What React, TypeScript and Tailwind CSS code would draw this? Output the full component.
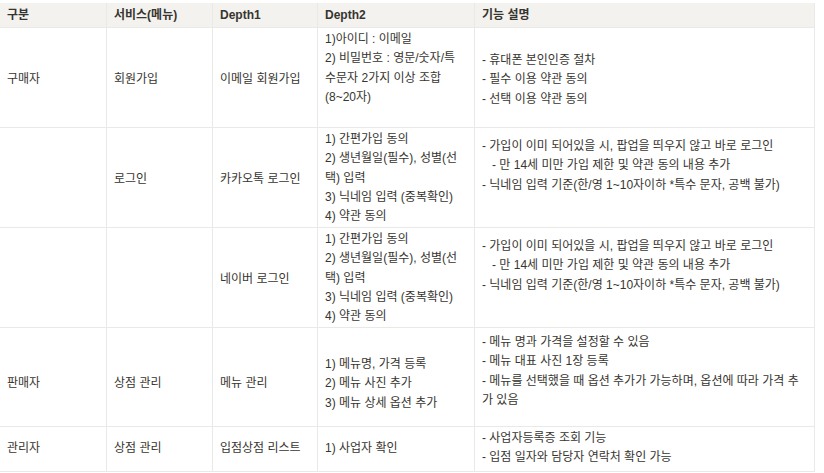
type Cell = { lines: string[]; pt: number; indent?: number[] };
type Row = { h: string; cells: Cell[] };

const cols = "grid grid-cols-[106px_106px_105px_157px_341px]";

const rows: Row[] = [
	{
		h: "h-[100px]",
		cells: [
			{ lines: ["구매자"], pt: 42 },
			{ lines: ["회원가입"], pt: 42 },
			{ lines: ["이메일 회원가입"], pt: 42 },
			{
				lines: ["1)아이디 : 이메일", "2) 비밀번호 : 영문/숫자/특", "수문자 2가지 이상 조합", "(8~20자)"],
				pt: 2,
			},
			{ lines: ["- 휴대폰 본인인증 절차", "- 필수 이용 약관 동의", "- 선택 이용 약관 동의"], pt: 23 },
		],
	},
	{
		h: "h-[100px]",
		cells: [
			{ lines: [], pt: 0 },
			{ lines: ["로그인"], pt: 42 },
			{ lines: ["카카오톡 로그인"], pt: 42 },
			{
				lines: ["1) 간편가입 동의", "2) 생년월일(필수), 성별(선", "택) 입력", "3) 닉네임 입력 (중복확인)", "4) 약관 동의"],
				pt: 2,
			},
			{
				lines: [
					"- 가입이 이미 되어있을 시, 팝업을 띄우지 않고 바로 로그인",
					"- 만 14세 미만 가입 제한 및 약관 동의 내용 추가",
					"- 닉네임 입력 기준(한/영 1~10자이하 *특수 문자, 공백 불가)",
				],
				pt: 9,
				indent: [1],
			},
		],
	},
	{
		h: "h-[100px]",
		cells: [
			{ lines: [], pt: 0 },
			{ lines: [], pt: 0 },
			{ lines: ["네이버 로그인"], pt: 42 },
			{
				lines: ["1) 간편가입 동의", "2) 생년월일(필수), 성별(선", "택) 입력", "3) 닉네임 입력 (중복확인)", "4) 약관 동의"],
				pt: 2,
			},
			{
				lines: [
					"- 가입이 이미 되어있을 시, 팝업을 띄우지 않고 바로 로그인",
					"- 만 14세 미만 가입 제한 및 약관 동의 내용 추가",
					"- 닉네임 입력 기준(한/영 1~10자이하 *특수 문자, 공백 불가)",
				],
				pt: 9,
				indent: [1],
			},
		],
	},
	{
		h: "h-[99px]",
		cells: [
			{ lines: ["판매자"], pt: 46 },
			{ lines: ["상점 관리"], pt: 46 },
			{ lines: ["메뉴 관리"], pt: 46 },
			{ lines: ["1) 메뉴명, 가격 등록", "2) 메뉴 사진 추가", "3) 메뉴 상세 옵션 추가"], pt: 27 },
			{
				lines: [
					"- 메뉴 명과 가격을 설정할 수 있음",
					"- 메뉴 대표 사진 1장 등록",
					"- 메뉴를 선택했을 때 옵션 추가가 가능하며, 옵션에 따라 가격 추",
					"가 있음",
				],
				pt: 5,
			},
		],
	},
	{
		h: "h-[45px]",
		cells: [
			{ lines: ["관리자"], pt: 12 },
			{ lines: ["상점 관리"], pt: 12 },
			{ lines: ["입점상점 리스트"], pt: 12 },
			{ lines: ["1) 사업자 확인"], pt: 12 },
			{ lines: ["- 사업자등록증 조회 기능", "- 입점 일자와 담당자 연락처 확인 가능"], pt: 2 },
		],
	},
];

const headers = ["구분", "서비스(메뉴)", "Depth1", "Depth2", "기능 설명"];

export default function App() {
	return (
		<div className="w-[824px] h-[473px] bg-white pt-[3px] font-['Liberation_Sans','Noto_Sans_CJK_KR',sans-serif] text-[12px] text-[#37352f]">
			<div className="w-[815px] border-r border-[#e9e9e7]">
				<div className={`${cols} h-[25px] bg-[#f3f2ef] border-b border-[#e9e9e7] font-bold`}>
					{headers.map((h, i) => (
						<div
							key={h}
							className={`flex items-center pl-[7px] ${i > 0 ? "border-l border-[#e9e9e7]" : ""}`}
						>
							{h}
						</div>
					))}
				</div>
				{rows.map((row, r) => (
					<div key={r} className={`${cols} ${row.h} border-b border-[#e9e9e7]`}>
						{row.cells.map((cell, i) => (
							<div
								key={i}
								className={`pl-[7px] leading-[19.3px] whitespace-nowrap ${i > 0 ? "border-l border-[#e9e9e7]" : ""}`}
								style={{ paddingTop: cell.pt }}
							>
								{cell.lines.map((line, j) => (
									<div key={j} className={cell.indent?.includes(j) ? "pl-[10px]" : ""}>
										{line}
									</div>
								))}
							</div>
						))}
					</div>
				))}
			</div>
		</div>
	);
}
